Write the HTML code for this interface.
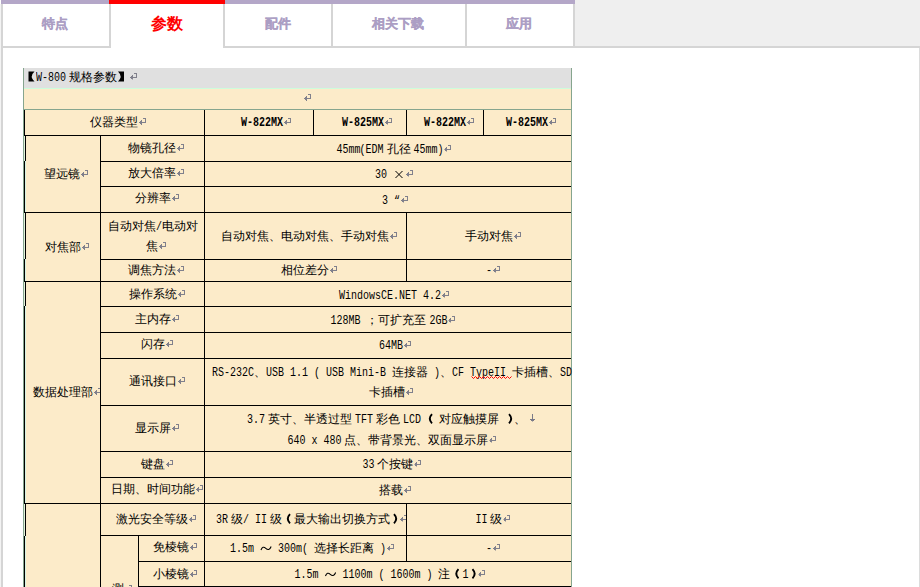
<!DOCTYPE html>
<html><head><meta charset="utf-8"><style>
html,body{margin:0;padding:0;background:#fff;}
body{width:920px;height:587px;overflow:hidden;position:relative;font-family:"Liberation Sans",sans-serif;font-size:12px;color:#000;font-weight:500;}
body>div{position:absolute;}
.tab{top:24px;transform:translate(-50%,-50%);font-weight:900;font-size:12.5px;color:#ac9ec4;-webkit-text-stroke:0.25px #ac9ec4;white-space:nowrap;line-height:16px;}
.tab.act{top:23.5px;font-size:16px;color:#ff0000;-webkit-text-stroke:0;line-height:18px;}
.t{transform:translate(-50%,-50%);white-space:nowrap;line-height:14px;}
.t.l{transform:translate(0,-50%);}
.in{position:relative;display:inline-block;}
.m{font-family:"Liberation Mono",monospace;font-size:12px;display:inline-block;transform:scaleX(0.8333);transform-origin:0 0;}
.b .m{font-weight:bold;}
.rt{position:absolute;left:100%;top:3px;margin-left:1px;line-height:0;}
.ns{display:inline-block;width:3px;}
.g{display:inline-block;vertical-align:-1px;}
.nb{display:inline-block;width:4px;overflow:visible;}
</style></head><body>
<div style="left:575px;top:0px;width:345px;height:46px;background:#efefef"></div>
<div style="left:1px;top:0px;width:574px;height:4px;background:#b4a7c8"></div>
<div style="left:109px;top:0px;width:116px;height:4px;background:#ff0000"></div>
<div style="left:1px;top:4px;width:2px;height:44px;background:#d5d5d5"></div>
<div style="left:109px;top:4px;width:2px;height:44px;background:#d5d5d5"></div>
<div style="left:223px;top:4px;width:2px;height:44px;background:#d5d5d5"></div>
<div style="left:331px;top:4px;width:2px;height:44px;background:#d5d5d5"></div>
<div style="left:465px;top:4px;width:2px;height:44px;background:#d5d5d5"></div>
<div style="left:573px;top:4px;width:2px;height:44px;background:#d5d5d5"></div>
<div style="left:1px;top:4px;width:2px;height:583px;background:#d5d5d5"></div>
<div style="left:0px;top:4px;width:1px;height:583px;background:#f3f3f3"></div>
<div style="left:1px;top:46px;width:110px;height:2px;background:#d5d5d5"></div>
<div style="left:223px;top:46px;width:697px;height:2px;background:#d5d5d5"></div>
<div style="left:919px;top:48px;width:1px;height:539px;background:#dcdcdc"></div>
<div class="tab" style="left:55px">特点</div>
<div class="tab act" style="left:167px">参数</div>
<div class="tab" style="left:278px">配件</div>
<div class="tab" style="left:398px">相关下载</div>
<div class="tab" style="left:519px">应用</div>
<div style="left:24px;top:68px;width:547px;height:20px;background:#e0e0e0"></div>
<div style="left:24px;top:88px;width:547px;height:1px;background:#cdfddc"></div>
<div style="left:24px;top:89px;width:547px;height:498px;background:#fcebc9"></div>
<div style="left:23px;top:68px;width:1px;height:519px;background:#86a58e"></div>
<div style="left:571px;top:68px;width:1px;height:519px;background:#86a58e"></div>
<div style="left:24px;top:109px;width:547px;height:1px;background:#86a58e"></div>
<div style="left:24px;top:110px;width:1px;height:26px;background:#000"></div>
<div style="left:24px;top:161px;width:1px;height:51px;background:#000"></div>
<div style="left:25px;top:161px;width:1px;height:51px;background:#d8f4e2"></div>
<div style="left:24px;top:259px;width:1px;height:23px;background:#000"></div>
<div style="left:25px;top:259px;width:1px;height:23px;background:#d8f4e2"></div>
<div style="left:24px;top:306px;width:1px;height:198px;background:#000"></div>
<div style="left:25px;top:306px;width:1px;height:198px;background:#d8f4e2"></div>
<div style="left:24px;top:536px;width:1px;height:51px;background:#000"></div>
<div style="left:25px;top:536px;width:1px;height:51px;background:#d8f4e2"></div>
<div style="left:25px;top:136px;width:1px;height:25px;background:#000"></div>
<div style="left:24px;top:136px;width:1px;height:25px;background:#e2f2dc"></div>
<div style="left:25px;top:212px;width:1px;height:47px;background:#000"></div>
<div style="left:24px;top:212px;width:1px;height:47px;background:#e2f2dc"></div>
<div style="left:25px;top:282px;width:1px;height:24px;background:#000"></div>
<div style="left:24px;top:282px;width:1px;height:24px;background:#e2f2dc"></div>
<div style="left:25px;top:504px;width:1px;height:32px;background:#000"></div>
<div style="left:24px;top:504px;width:1px;height:32px;background:#e2f2dc"></div>
<div style="left:100px;top:136px;width:1px;height:451px;background:#000;z-index:2"></div>
<div style="left:204px;top:110px;width:1px;height:477px;background:#000;z-index:2"></div>
<div style="left:313px;top:110px;width:1px;height:25px;background:#000"></div>
<div style="left:406px;top:110px;width:1px;height:25px;background:#000"></div>
<div style="left:483px;top:110px;width:1px;height:25px;background:#000"></div>
<div style="left:406px;top:213px;width:1px;height:68px;background:#000;z-index:2"></div>
<div style="left:406px;top:504px;width:1px;height:57px;background:#000;z-index:2"></div>
<div style="left:138px;top:536px;width:1px;height:51px;background:#000;z-index:2"></div>
<div style="left:24px;top:135px;width:547px;height:1px;background:#000"></div>
<div style="left:24px;top:212px;width:547px;height:1px;background:#000"></div>
<div style="left:24px;top:281px;width:547px;height:1px;background:#000"></div>
<div style="left:24px;top:503px;width:547px;height:1px;background:#000"></div>
<div style="left:100px;top:161px;width:471px;height:1px;background:#000"></div>
<div style="left:100px;top:186px;width:471px;height:1px;background:#000"></div>
<div style="left:100px;top:259px;width:471px;height:1px;background:#000"></div>
<div style="left:100px;top:306px;width:471px;height:1px;background:#000"></div>
<div style="left:100px;top:332px;width:471px;height:1px;background:#000"></div>
<div style="left:100px;top:358px;width:471px;height:1px;background:#000"></div>
<div style="left:100px;top:405px;width:471px;height:1px;background:#000"></div>
<div style="left:100px;top:451px;width:471px;height:1px;background:#000"></div>
<div style="left:100px;top:477px;width:471px;height:1px;background:#000"></div>
<div style="left:100px;top:535px;width:471px;height:1px;background:#000"></div>
<div style="left:138px;top:561px;width:433px;height:1px;background:#000"></div>
<div style="left:138px;top:586px;width:433px;height:1px;background:#000"></div>
<div class="t l" style="left:24px;top:77px;"><span class="in"><svg class="g" width="12" height="12" viewBox="0 0 12 12" style="vertical-align:-2px"><path d="M4.5 1H10.5Q5 6 10.5 11H4.5Z" fill="#000"/></svg><span class="m" style="margin-right:-6.0px">W-800</span><span class="ns"></span>规格参数<svg class="g" width="12" height="12" viewBox="0 0 12 12" style="vertical-align:-2px"><path d="M7 1H1Q6.2 6 1 11H7Z" fill="#000"/></svg><span class="rt"><svg width="7" height="7" viewBox="0 0 7 7" shape-rendering="crispEdges" fill="#80808c"><rect x="4" y="0" width="3" height="1"/><rect x="6" y="0" width="1" height="5"/><rect x="0" y="4" width="7" height="1"/><rect x="1" y="3" width="2" height="3"/><rect x="2" y="2" width="1" height="5"/></svg></span></span></div>
<div style="left:304px;top:94px;line-height:0"><svg width="7" height="7" viewBox="0 0 7 7" shape-rendering="crispEdges" fill="#80808c"><rect x="4" y="0" width="3" height="1"/><rect x="6" y="0" width="1" height="5"/><rect x="0" y="4" width="7" height="1"/><rect x="1" y="3" width="2" height="3"/><rect x="2" y="2" width="1" height="5"/></svg></div>
<div class="t" style="left:114px;top:122px;"><span class="in">仪器类型<span class="rt"><svg width="7" height="7" viewBox="0 0 7 7" shape-rendering="crispEdges" fill="#80808c"><rect x="4" y="0" width="3" height="1"/><rect x="6" y="0" width="1" height="5"/><rect x="0" y="4" width="7" height="1"/><rect x="1" y="3" width="2" height="3"/><rect x="2" y="2" width="1" height="5"/></svg></span></span></div>
<div class="t b" style="left:261.8px;top:122px;"><span class="in"><span class="m" style="margin-right:-8.4px">W-822MX</span><span class="rt"><svg width="7" height="7" viewBox="0 0 7 7" shape-rendering="crispEdges" fill="#80808c"><rect x="4" y="0" width="3" height="1"/><rect x="6" y="0" width="1" height="5"/><rect x="0" y="4" width="7" height="1"/><rect x="1" y="3" width="2" height="3"/><rect x="2" y="2" width="1" height="5"/></svg></span></span></div>
<div class="t b" style="left:363px;top:122px;"><span class="in"><span class="m" style="margin-right:-8.4px">W-825MX</span><span class="rt"><svg width="7" height="7" viewBox="0 0 7 7" shape-rendering="crispEdges" fill="#80808c"><rect x="4" y="0" width="3" height="1"/><rect x="6" y="0" width="1" height="5"/><rect x="0" y="4" width="7" height="1"/><rect x="1" y="3" width="2" height="3"/><rect x="2" y="2" width="1" height="5"/></svg></span></span></div>
<div class="t b" style="left:445px;top:122px;"><span class="in"><span class="m" style="margin-right:-8.4px">W-822MX</span><span class="rt"><svg width="7" height="7" viewBox="0 0 7 7" shape-rendering="crispEdges" fill="#80808c"><rect x="4" y="0" width="3" height="1"/><rect x="6" y="0" width="1" height="5"/><rect x="0" y="4" width="7" height="1"/><rect x="1" y="3" width="2" height="3"/><rect x="2" y="2" width="1" height="5"/></svg></span></span></div>
<div class="t b" style="left:527px;top:122px;"><span class="in"><span class="m" style="margin-right:-8.4px">W-825MX</span><span class="rt"><svg width="7" height="7" viewBox="0 0 7 7" shape-rendering="crispEdges" fill="#80808c"><rect x="4" y="0" width="3" height="1"/><rect x="6" y="0" width="1" height="5"/><rect x="0" y="4" width="7" height="1"/><rect x="1" y="3" width="2" height="3"/><rect x="2" y="2" width="1" height="5"/></svg></span></span></div>
<div class="t" style="left:62.4px;top:173.8px;"><span class="in">望远镜<span class="rt"><svg width="7" height="7" viewBox="0 0 7 7" shape-rendering="crispEdges" fill="#80808c"><rect x="4" y="0" width="3" height="1"/><rect x="6" y="0" width="1" height="5"/><rect x="0" y="4" width="7" height="1"/><rect x="1" y="3" width="2" height="3"/><rect x="2" y="2" width="1" height="5"/></svg></span></span></div>
<div class="t" style="left:152.4px;top:147.5px;"><span class="in">物镜孔径<span class="rt"><svg width="7" height="7" viewBox="0 0 7 7" shape-rendering="crispEdges" fill="#80808c"><rect x="4" y="0" width="3" height="1"/><rect x="6" y="0" width="1" height="5"/><rect x="0" y="4" width="7" height="1"/><rect x="1" y="3" width="2" height="3"/><rect x="2" y="2" width="1" height="5"/></svg></span></span></div>
<div class="t" style="left:152.4px;top:173.4px;"><span class="in">放大倍率<span class="rt"><svg width="7" height="7" viewBox="0 0 7 7" shape-rendering="crispEdges" fill="#80808c"><rect x="4" y="0" width="3" height="1"/><rect x="6" y="0" width="1" height="5"/><rect x="0" y="4" width="7" height="1"/><rect x="1" y="3" width="2" height="3"/><rect x="2" y="2" width="1" height="5"/></svg></span></span></div>
<div class="t" style="left:152.6px;top:198.2px;"><span class="in">分辨率<span class="rt"><svg width="7" height="7" viewBox="0 0 7 7" shape-rendering="crispEdges" fill="#80808c"><rect x="4" y="0" width="3" height="1"/><rect x="6" y="0" width="1" height="5"/><rect x="0" y="4" width="7" height="1"/><rect x="1" y="3" width="2" height="3"/><rect x="2" y="2" width="1" height="5"/></svg></span></span></div>
<div class="t" style="left:390px;top:148.5px;"><span class="in"><span class="m" style="margin-right:-4.8px">45mm</span><span class="m" style="margin:0 -1px 0 -1px">(</span><span class="m" style="margin-right:-3.6px">EDM</span><span class="ns"></span>孔径<span class="ns"></span><span class="m" style="margin-right:-6.0px">45mm)</span><span class="rt"><svg width="7" height="7" viewBox="0 0 7 7" shape-rendering="crispEdges" fill="#80808c"><rect x="4" y="0" width="3" height="1"/><rect x="6" y="0" width="1" height="5"/><rect x="0" y="4" width="7" height="1"/><rect x="1" y="3" width="2" height="3"/><rect x="2" y="2" width="1" height="5"/></svg></span></span></div>
<div class="t" style="left:390px;top:174.4px;"><span class="in"><span class="m" style="margin-right:-3.6px">30&nbsp;</span><svg class="g" width="12" height="12" viewBox="0 0 12 12" style="vertical-align:-3px"><path d="M2.5 2.5L9.5 9.5M9.5 2.5L2.5 9.5" stroke="#000" stroke-width="1" fill="none"/></svg><span class="rt"><svg width="7" height="7" viewBox="0 0 7 7" shape-rendering="crispEdges" fill="#80808c"><rect x="4" y="0" width="3" height="1"/><rect x="6" y="0" width="1" height="5"/><rect x="0" y="4" width="7" height="1"/><rect x="1" y="3" width="2" height="3"/><rect x="2" y="2" width="1" height="5"/></svg></span></span></div>
<div class="t" style="left:391px;top:199.5px;"><span class="in"><span class="m" style="margin-right:-3.6px">3&nbsp;“</span><span class="rt"><svg width="7" height="7" viewBox="0 0 7 7" shape-rendering="crispEdges" fill="#80808c"><rect x="4" y="0" width="3" height="1"/><rect x="6" y="0" width="1" height="5"/><rect x="0" y="4" width="7" height="1"/><rect x="1" y="3" width="2" height="3"/><rect x="2" y="2" width="1" height="5"/></svg></span></span></div>
<div class="t" style="left:62.8px;top:247.2px;"><span class="in">对焦部<span class="rt"><svg width="7" height="7" viewBox="0 0 7 7" shape-rendering="crispEdges" fill="#80808c"><rect x="4" y="0" width="3" height="1"/><rect x="6" y="0" width="1" height="5"/><rect x="0" y="4" width="7" height="1"/><rect x="1" y="3" width="2" height="3"/><rect x="2" y="2" width="1" height="5"/></svg></span></span></div>
<div class="t" style="left:153px;top:225.5px;"><span class="in">自动对焦<span class="m" style="margin-right:-1.2px">/</span>电动对</span></div>
<div class="t" style="left:152.4px;top:245.5px;"><span class="in">焦<span class="rt"><svg width="7" height="7" viewBox="0 0 7 7" shape-rendering="crispEdges" fill="#80808c"><rect x="4" y="0" width="3" height="1"/><rect x="6" y="0" width="1" height="5"/><rect x="0" y="4" width="7" height="1"/><rect x="1" y="3" width="2" height="3"/><rect x="2" y="2" width="1" height="5"/></svg></span></span></div>
<div class="t" style="left:151.8px;top:269.9px;"><span class="in">调焦方法<span class="rt"><svg width="7" height="7" viewBox="0 0 7 7" shape-rendering="crispEdges" fill="#80808c"><rect x="4" y="0" width="3" height="1"/><rect x="6" y="0" width="1" height="5"/><rect x="0" y="4" width="7" height="1"/><rect x="1" y="3" width="2" height="3"/><rect x="2" y="2" width="1" height="5"/></svg></span></span></div>
<div class="t" style="left:304.7px;top:235.6px;"><span class="in">自动对焦、电动对焦、手动对焦<span class="rt"><svg width="7" height="7" viewBox="0 0 7 7" shape-rendering="crispEdges" fill="#80808c"><rect x="4" y="0" width="3" height="1"/><rect x="6" y="0" width="1" height="5"/><rect x="0" y="4" width="7" height="1"/><rect x="1" y="3" width="2" height="3"/><rect x="2" y="2" width="1" height="5"/></svg></span></span></div>
<div class="t" style="left:488.5px;top:235.6px;"><span class="in">手动对焦<span class="rt"><svg width="7" height="7" viewBox="0 0 7 7" shape-rendering="crispEdges" fill="#80808c"><rect x="4" y="0" width="3" height="1"/><rect x="6" y="0" width="1" height="5"/><rect x="0" y="4" width="7" height="1"/><rect x="1" y="3" width="2" height="3"/><rect x="2" y="2" width="1" height="5"/></svg></span></span></div>
<div class="t" style="left:304.5px;top:269.9px;"><span class="in">相位差分<span class="rt"><svg width="7" height="7" viewBox="0 0 7 7" shape-rendering="crispEdges" fill="#80808c"><rect x="4" y="0" width="3" height="1"/><rect x="6" y="0" width="1" height="5"/><rect x="0" y="4" width="7" height="1"/><rect x="1" y="3" width="2" height="3"/><rect x="2" y="2" width="1" height="5"/></svg></span></span></div>
<div class="t" style="left:488.6px;top:269.9px;"><span class="in"><span class="m" style="margin-right:-1.2px">-</span><span class="rt"><svg width="7" height="7" viewBox="0 0 7 7" shape-rendering="crispEdges" fill="#80808c"><rect x="4" y="0" width="3" height="1"/><rect x="6" y="0" width="1" height="5"/><rect x="0" y="4" width="7" height="1"/><rect x="1" y="3" width="2" height="3"/><rect x="2" y="2" width="1" height="5"/></svg></span></span></div>
<div class="t" style="left:62.5px;top:391.5px;"><span class="in">数据处理部<span class="rt"><svg width="7" height="7" viewBox="0 0 7 7" shape-rendering="crispEdges" fill="#80808c"><rect x="4" y="0" width="3" height="1"/><rect x="6" y="0" width="1" height="5"/><rect x="0" y="4" width="7" height="1"/><rect x="1" y="3" width="2" height="3"/><rect x="2" y="2" width="1" height="5"/></svg></span></span></div>
<div class="t" style="left:152.8px;top:294px;"><span class="in">操作系统<span class="rt"><svg width="7" height="7" viewBox="0 0 7 7" shape-rendering="crispEdges" fill="#80808c"><rect x="4" y="0" width="3" height="1"/><rect x="6" y="0" width="1" height="5"/><rect x="0" y="4" width="7" height="1"/><rect x="1" y="3" width="2" height="3"/><rect x="2" y="2" width="1" height="5"/></svg></span></span></div>
<div class="t" style="left:152.6px;top:318.8px;"><span class="in">主内存<span class="rt"><svg width="7" height="7" viewBox="0 0 7 7" shape-rendering="crispEdges" fill="#80808c"><rect x="4" y="0" width="3" height="1"/><rect x="6" y="0" width="1" height="5"/><rect x="0" y="4" width="7" height="1"/><rect x="1" y="3" width="2" height="3"/><rect x="2" y="2" width="1" height="5"/></svg></span></span></div>
<div class="t" style="left:152.8px;top:344.4px;"><span class="in">闪存<span class="rt"><svg width="7" height="7" viewBox="0 0 7 7" shape-rendering="crispEdges" fill="#80808c"><rect x="4" y="0" width="3" height="1"/><rect x="6" y="0" width="1" height="5"/><rect x="0" y="4" width="7" height="1"/><rect x="1" y="3" width="2" height="3"/><rect x="2" y="2" width="1" height="5"/></svg></span></span></div>
<div class="t" style="left:152.8px;top:381.2px;"><span class="in">通讯接口<span class="rt"><svg width="7" height="7" viewBox="0 0 7 7" shape-rendering="crispEdges" fill="#80808c"><rect x="4" y="0" width="3" height="1"/><rect x="6" y="0" width="1" height="5"/><rect x="0" y="4" width="7" height="1"/><rect x="1" y="3" width="2" height="3"/><rect x="2" y="2" width="1" height="5"/></svg></span></span></div>
<div class="t" style="left:390.4px;top:295.2px;"><span class="in"><span class="m" style="margin-right:-20.4px">WindowsCE.NET&nbsp;4.2</span><span class="rt"><svg width="7" height="7" viewBox="0 0 7 7" shape-rendering="crispEdges" fill="#80808c"><rect x="4" y="0" width="3" height="1"/><rect x="6" y="0" width="1" height="5"/><rect x="0" y="4" width="7" height="1"/><rect x="1" y="3" width="2" height="3"/><rect x="2" y="2" width="1" height="5"/></svg></span></span></div>
<div class="t" style="left:388.5px;top:319.5px;"><span class="in"><span class="m" style="margin-right:-7.2px">128MB&nbsp;</span>；可扩充至<span class="ns"></span><span class="m" style="margin-right:-3.6px">2GB</span><span class="rt"><svg width="7" height="7" viewBox="0 0 7 7" shape-rendering="crispEdges" fill="#80808c"><rect x="4" y="0" width="3" height="1"/><rect x="6" y="0" width="1" height="5"/><rect x="0" y="4" width="7" height="1"/><rect x="1" y="3" width="2" height="3"/><rect x="2" y="2" width="1" height="5"/></svg></span></span></div>
<div class="t" style="left:390.6px;top:345.2px;"><span class="in"><span class="m" style="margin-right:-4.8px">64MB</span><span class="rt"><svg width="7" height="7" viewBox="0 0 7 7" shape-rendering="crispEdges" fill="#80808c"><rect x="4" y="0" width="3" height="1"/><rect x="6" y="0" width="1" height="5"/><rect x="0" y="4" width="7" height="1"/><rect x="1" y="3" width="2" height="3"/><rect x="2" y="2" width="1" height="5"/></svg></span></span></div>
<div class="t l" style="left:212.2px;top:371.5px;"><span class="in"><span class="m" style="margin-right:-8.4px">RS-232C</span>、<span class="m" style="margin-right:-25.2px">USB&nbsp;1.1&nbsp;(&nbsp;USB&nbsp;Mini-B&nbsp;</span>连接器<span class="m" style="margin-right:-2.4px">&nbsp;)</span>、<span class="m" style="margin-right:-12.0px">CF&nbsp;TypeII&nbsp;</span>卡插槽、<span class="m" style="margin-right:-2.4px">SD</span></span></div>
<div class="t" style="left:387px;top:391.9px;"><span class="in">卡插槽<span class="rt"><svg width="7" height="7" viewBox="0 0 7 7" shape-rendering="crispEdges" fill="#80808c"><rect x="4" y="0" width="3" height="1"/><rect x="6" y="0" width="1" height="5"/><rect x="0" y="4" width="7" height="1"/><rect x="1" y="3" width="2" height="3"/><rect x="2" y="2" width="1" height="5"/></svg></span></span></div>
<div class="t" style="left:152.8px;top:428px;"><span class="in">显示屏<span class="rt"><svg width="7" height="7" viewBox="0 0 7 7" shape-rendering="crispEdges" fill="#80808c"><rect x="4" y="0" width="3" height="1"/><rect x="6" y="0" width="1" height="5"/><rect x="0" y="4" width="7" height="1"/><rect x="1" y="3" width="2" height="3"/><rect x="2" y="2" width="1" height="5"/></svg></span></span></div>
<div class="t" style="left:152.5px;top:463.8px;"><span class="in">键盘<span class="rt"><svg width="7" height="7" viewBox="0 0 7 7" shape-rendering="crispEdges" fill="#80808c"><rect x="4" y="0" width="3" height="1"/><rect x="6" y="0" width="1" height="5"/><rect x="0" y="4" width="7" height="1"/><rect x="1" y="3" width="2" height="3"/><rect x="2" y="2" width="1" height="5"/></svg></span></span></div>
<div class="t" style="left:152.5px;top:489.3px;"><span class="in">日期、时间功能<span class="rt"><svg width="7" height="7" viewBox="0 0 7 7" shape-rendering="crispEdges" fill="#80808c"><rect x="4" y="0" width="3" height="1"/><rect x="6" y="0" width="1" height="5"/><rect x="0" y="4" width="7" height="1"/><rect x="1" y="3" width="2" height="3"/><rect x="2" y="2" width="1" height="5"/></svg></span></span></div>
<div class="t l" style="left:246.9px;top:419.2px;"><span class="in"><span class="m" style="margin-right:-3.6px">3.7</span><span class="ns"></span>英寸、半透过型<span class="ns"></span><span class="m" style="margin-right:-3.6px">TFT</span><span class="ns"></span>彩色<span class="ns"></span><span class="m" style="margin-right:-4.8px">LCD&nbsp;</span><svg class="g" width="6" height="12" viewBox="0 0 6 12" style="vertical-align:-2px"><path d="M5 1.6Q0.6 6.3 5 10.8" stroke="#000" stroke-width="1.9" fill="none"/></svg><span class="m" style="margin-right:-1.2px">&nbsp;</span>对应触摸屏<span class="m" style="margin-right:-1.2px">&nbsp;</span><span class="ns"></span><svg class="g" width="6" height="12" viewBox="0 0 6 12" style="vertical-align:-2px"><path d="M1 1.6Q5.4 6.3 1 10.8" stroke="#000" stroke-width="1.9" fill="none"/></svg>、<span class="rt" style="margin-left:4px;top:2.3px"><svg width="5" height="8" viewBox="0 0 5 8" shape-rendering="crispEdges" fill="#7a7a88"><rect x="2" y="0" width="1" height="8"/><rect x="0" y="5" width="5" height="1"/><rect x="1" y="6" width="3" height="1"/></svg></span></span></div>
<div class="t" style="left:387.5px;top:439.6px;"><span class="in"><span class="m" style="margin-right:-10.8px">640&nbsp;x&nbsp;480</span><span class="ns"></span>点、带背景光、双面显示屏<span class="rt"><svg width="7" height="7" viewBox="0 0 7 7" shape-rendering="crispEdges" fill="#80808c"><rect x="4" y="0" width="3" height="1"/><rect x="6" y="0" width="1" height="5"/><rect x="0" y="4" width="7" height="1"/><rect x="1" y="3" width="2" height="3"/><rect x="2" y="2" width="1" height="5"/></svg></span></span></div>
<div class="t" style="left:387.5px;top:464.3px;"><span class="in"><span class="m" style="margin-right:-2.4px">33</span><span class="ns"></span>个按键<span class="rt"><svg width="7" height="7" viewBox="0 0 7 7" shape-rendering="crispEdges" fill="#80808c"><rect x="4" y="0" width="3" height="1"/><rect x="6" y="0" width="1" height="5"/><rect x="0" y="4" width="7" height="1"/><rect x="1" y="3" width="2" height="3"/><rect x="2" y="2" width="1" height="5"/></svg></span></span></div>
<div class="t" style="left:391px;top:489.5px;"><span class="in">搭载<span class="rt"><svg width="7" height="7" viewBox="0 0 7 7" shape-rendering="crispEdges" fill="#80808c"><rect x="4" y="0" width="3" height="1"/><rect x="6" y="0" width="1" height="5"/><rect x="0" y="4" width="7" height="1"/><rect x="1" y="3" width="2" height="3"/><rect x="2" y="2" width="1" height="5"/></svg></span></span></div>
<div class="t" style="left:152px;top:518.6px;"><span class="in">激光安全等级<span class="rt"><svg width="7" height="7" viewBox="0 0 7 7" shape-rendering="crispEdges" fill="#80808c"><rect x="4" y="0" width="3" height="1"/><rect x="6" y="0" width="1" height="5"/><rect x="0" y="4" width="7" height="1"/><rect x="1" y="3" width="2" height="3"/><rect x="2" y="2" width="1" height="5"/></svg></span></span></div>
<div class="t" style="left:170.6px;top:547.3px;"><span class="in">免棱镜<span class="rt"><svg width="7" height="7" viewBox="0 0 7 7" shape-rendering="crispEdges" fill="#80808c"><rect x="4" y="0" width="3" height="1"/><rect x="6" y="0" width="1" height="5"/><rect x="0" y="4" width="7" height="1"/><rect x="1" y="3" width="2" height="3"/><rect x="2" y="2" width="1" height="5"/></svg></span></span></div>
<div class="t" style="left:170.6px;top:573.7px;"><span class="in">小棱镜<span class="rt"><svg width="7" height="7" viewBox="0 0 7 7" shape-rendering="crispEdges" fill="#80808c"><rect x="4" y="0" width="3" height="1"/><rect x="6" y="0" width="1" height="5"/><rect x="0" y="4" width="7" height="1"/><rect x="1" y="3" width="2" height="3"/><rect x="2" y="2" width="1" height="5"/></svg></span></span></div>
<div class="t l" style="left:112.4px;top:589px;"><span class="in">测<span class="rt"><svg width="7" height="7" viewBox="0 0 7 7" shape-rendering="crispEdges" fill="#80808c"><rect x="4" y="0" width="3" height="1"/><rect x="6" y="0" width="1" height="5"/><rect x="0" y="4" width="7" height="1"/><rect x="1" y="3" width="2" height="3"/><rect x="2" y="2" width="1" height="5"/></svg></span></span></div>
<div class="t l" style="left:215.5px;top:518.5px;"><span class="in"><span class="m" style="margin-right:-2.4px">3R</span><span class="ns"></span>级<span class="m" style="margin-right:-4.8px">/&nbsp;II</span><span class="ns"></span>级<span class="ns"></span><svg class="g" width="6" height="12" viewBox="0 0 6 12" style="vertical-align:-2px"><path d="M5 1.6Q0.6 6.3 5 10.8" stroke="#000" stroke-width="1.9" fill="none"/></svg><span class="ns"></span>最大输出切换方式<span class="ns"></span><svg class="g" width="6" height="12" viewBox="0 0 6 12" style="vertical-align:-2px"><path d="M1 1.6Q5.4 6.3 1 10.8" stroke="#000" stroke-width="1.9" fill="none"/></svg><span class="rt"><svg width="7" height="7" viewBox="0 0 7 7" shape-rendering="crispEdges" fill="#80808c"><rect x="4" y="0" width="3" height="1"/><rect x="6" y="0" width="1" height="5"/><rect x="0" y="4" width="7" height="1"/><rect x="1" y="3" width="2" height="3"/><rect x="2" y="2" width="1" height="5"/></svg></span></span></div>
<div class="t" style="left:488.8px;top:518.5px;"><span class="in"><span class="m" style="margin-right:-2.4px">II</span><span class="ns"></span>级<span class="rt"><svg width="7" height="7" viewBox="0 0 7 7" shape-rendering="crispEdges" fill="#80808c"><rect x="4" y="0" width="3" height="1"/><rect x="6" y="0" width="1" height="5"/><rect x="0" y="4" width="7" height="1"/><rect x="1" y="3" width="2" height="3"/><rect x="2" y="2" width="1" height="5"/></svg></span></span></div>
<div class="t" style="left:308px;top:547.8px;"><span class="in"><span class="m" style="margin-right:-6.0px">1.5m&nbsp;</span><svg class="g" width="12" height="12" viewBox="0 0 12 12"><path d="M1 9.5C2.2 6.5 3.8 6 5.8 7.8 S9.8 9.6 11.2 6" stroke="#000" stroke-width="1.1" fill="none"/></svg><span class="m" style="margin-right:-8.4px">&nbsp;300m(&nbsp;</span>选择长距离<span class="m" style="margin-right:-2.4px">&nbsp;)</span><span class="rt"><svg width="7" height="7" viewBox="0 0 7 7" shape-rendering="crispEdges" fill="#80808c"><rect x="4" y="0" width="3" height="1"/><rect x="6" y="0" width="1" height="5"/><rect x="0" y="4" width="7" height="1"/><rect x="1" y="3" width="2" height="3"/><rect x="2" y="2" width="1" height="5"/></svg></span></span></div>
<div class="t" style="left:488.6px;top:547.8px;"><span class="in"><span class="m" style="margin-right:-1.2px">-</span><span class="rt"><svg width="7" height="7" viewBox="0 0 7 7" shape-rendering="crispEdges" fill="#80808c"><rect x="4" y="0" width="3" height="1"/><rect x="6" y="0" width="1" height="5"/><rect x="0" y="4" width="7" height="1"/><rect x="1" y="3" width="2" height="3"/><rect x="2" y="2" width="1" height="5"/></svg></span></span></div>
<div class="t" style="left:385.5px;top:573.5px;"><span class="in"><span class="m" style="margin-right:-6.0px">1.5m&nbsp;</span><svg class="g" width="12" height="12" viewBox="0 0 12 12"><path d="M1 9.5C2.2 6.5 3.8 6 5.8 7.8 S9.8 9.6 11.2 6" stroke="#000" stroke-width="1.1" fill="none"/></svg><span class="m" style="margin-right:-20.4px">&nbsp;1100m&nbsp;(&nbsp;1600m&nbsp;)&nbsp;</span>注<span class="ns"></span><svg class="g" width="6" height="12" viewBox="0 0 6 12" style="vertical-align:-2px"><path d="M5 1.6Q0.6 6.3 5 10.8" stroke="#000" stroke-width="1.9" fill="none"/></svg><span class="ns"></span><span class="m" style="margin-right:-1.2px">1</span><span class="ns"></span><svg class="g" width="6" height="12" viewBox="0 0 6 12" style="vertical-align:-2px"><path d="M1 1.6Q5.4 6.3 1 10.8" stroke="#000" stroke-width="1.9" fill="none"/></svg><span class="rt"><svg width="7" height="7" viewBox="0 0 7 7" shape-rendering="crispEdges" fill="#80808c"><rect x="4" y="0" width="3" height="1"/><rect x="6" y="0" width="1" height="5"/><rect x="0" y="4" width="7" height="1"/><rect x="1" y="3" width="2" height="3"/><rect x="2" y="2" width="1" height="5"/></svg></span></span></div>
<div style="left:471px;top:375px;line-height:0"><svg width="41" height="3" viewBox="0 0 41 3"><polyline points="0.5,0.5 2.5,2.5 4.5,0.5 6.5,2.5 8.5,0.5 10.5,2.5 12.5,0.5 14.5,2.5 16.5,0.5 18.5,2.5 20.5,0.5 22.5,2.5 24.5,0.5 26.5,2.5 28.5,0.5 30.5,2.5 32.5,0.5 34.5,2.5 36.5,0.5 38.5,2.5 40.5,0.5" stroke="#ff0000" stroke-width="1" fill="none"/></svg></div>
</body></html>
